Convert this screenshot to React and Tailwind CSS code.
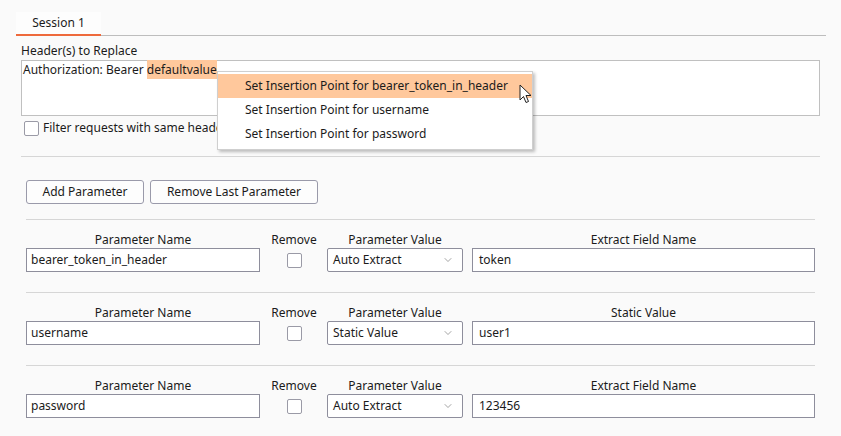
import { ChevronDown } from "lucide-react";

const rows = [
  { name: "bearer_token_in_header", mode: "Auto Extract", label: "Extract Field Name", value: "token" },
  { name: "username", mode: "Static Value", label: "Static Value", value: "user1" },
  { name: "password", mode: "Auto Extract", label: "Extract Field Name", value: "123456" },
];

function Checkbox() {
  return <div className="w-[15px] h-[15px] border border-[#9a9aa6] rounded-[2px] bg-white" />;
}

function ParamRow({ row }) {
  return (
    <div className="border-t border-[#d6d6d6] pt-[12px] pb-[20px]">
      <div className="flex items-end">
        <div className="w-[234px] flex flex-col">
          <div className="text-center h-[16px] leading-[16px]">Parameter Name</div>
          <div className="h-[24px] border border-[#8e8e9c] bg-white px-[4px] leading-[22px]">{row.name}</div>
        </div>
        <div className="ml-[2px] w-[64px] flex flex-col items-center">
          <div className="text-center h-[16px] leading-[16px]">Remove</div>
          <div className="h-[24px] flex items-center justify-center">
            <Checkbox />
          </div>
        </div>
        <div className="ml-[1px] w-[136px] flex flex-col">
          <div className="text-center h-[16px] leading-[16px]">Parameter Value</div>
          <div className="h-[24px] border border-[#8e8e9c] rounded-[2px] bg-white pl-[5px] pr-[8px] flex items-center justify-between">
            <span>{row.mode}</span>
            <ChevronDown size={12} strokeWidth={1.2} className="text-[#666]" />
          </div>
        </div>
        <div className="ml-[9px] flex-1 flex flex-col">
          <div className="text-center h-[16px] leading-[16px]">{row.label}</div>
          <div className="h-[24px] border border-[#8e8e9c] bg-white px-[6px] leading-[22px]">{row.value}</div>
        </div>
      </div>
    </div>
  );
}

export default function App() {
  return (
    <div
      className="relative w-[841px] h-[436px] overflow-hidden bg-[#fafafa] text-[12px] text-[#1b1b1b]"
      style={{ fontFamily: '"Noto Sans", "Open Sans", sans-serif' }}
    >
      {/* Tab bar */}
      <div className="pl-[16px] pt-[12px] pr-[15px]">
        <div className="flex border-b border-[#bdbdbd]">
          <div className="w-[85px] h-[24px] bg-[#fdfdfd] border-b-2 border-[#ee6a3c] text-center leading-[22px] -mb-px">
            Session 1
          </div>
        </div>
      </div>

      {/* Header section */}
      <div className="px-[21px] pt-[7px]">
        <div className="h-[17px] leading-[16px]">Header(s) to Replace</div>
        <div className="h-[56px] border border-[#c0c0c0] bg-white px-[1px] leading-[18px]">
          Authorization: Bearer <span className="bg-[#ffc89c] inline-block h-[19px] -mt-px pt-px">defaultvalue</span>
        </div>
        <div className="flex items-center gap-[4px] mt-[4px] pl-[3px] h-[16px]">
          <Checkbox />
          <span>Filter requests with same header</span>
        </div>
        <div className="mt-[20px] border-t border-[#d6d6d6]" />
      </div>

      {/* Parameters */}
      <div className="px-[26px]">
        <div className="flex gap-[6px] mt-[23px] mb-[15px]">
          <button className="h-[24px] w-[118px] border border-[#9a9aaa] rounded-[3px] bg-[#fdfdfd]">Add Parameter</button>
          <button className="h-[24px] w-[168px] border border-[#9a9aaa] rounded-[3px] bg-[#fdfdfd]">Remove Last Parameter</button>
        </div>
        {rows.map((r) => (
          <ParamRow key={r.name} row={r} />
        ))}
      </div>

      {/* Context menu */}
      <div className="absolute left-[217px] top-[71px] w-[316px] h-[79px] bg-white border border-[#cfcfcf] shadow-[2px_2px_3px_rgba(0,0,0,0.25)] py-[2px]">
        <div className="h-[24px] bg-[#ffc89c] pl-[27px] leading-[24px]">Set Insertion Point for bearer_token_in_header</div>
        <div className="h-[24px] pl-[27px] leading-[24px]">Set Insertion Point for username</div>
        <div className="h-[24px] pl-[27px] leading-[24px]">Set Insertion Point for password</div>
      </div>

      {/* Mouse cursor */}
      <svg className="absolute left-[519px] top-[84px]" width="13" height="20" viewBox="0 0 13 20">
        <path d="M1 1 L1 16 L4.5 12.5 L7 18.5 L9.5 17.5 L7 11.5 L12 11.5 Z" fill="white" stroke="#222" strokeWidth="1" strokeLinejoin="round" />
      </svg>
    </div>
  );
}
